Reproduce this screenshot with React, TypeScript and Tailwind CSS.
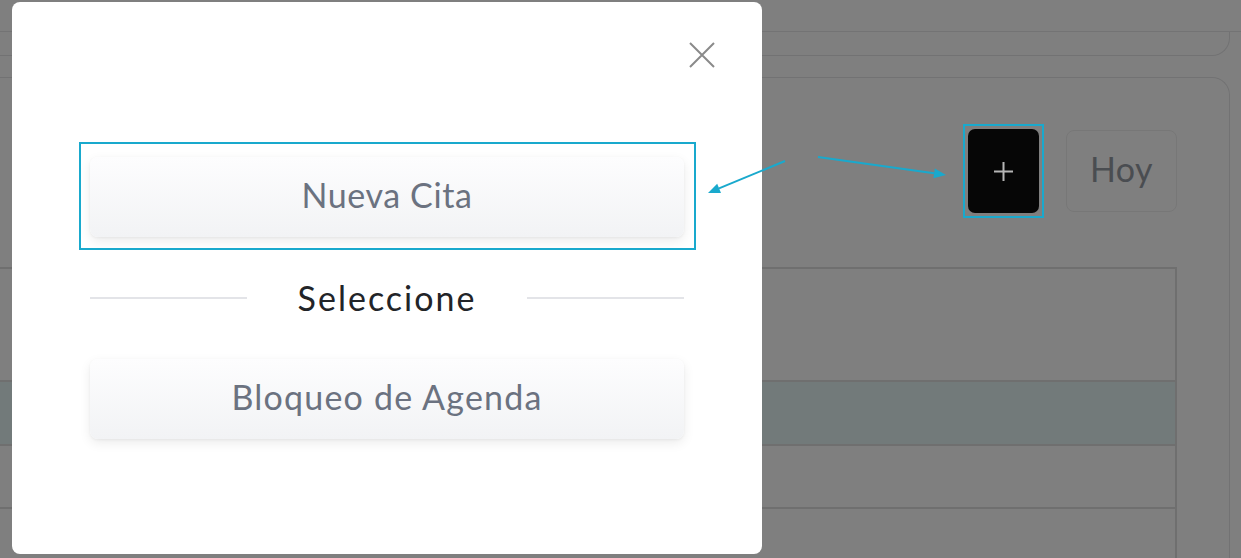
const actionBtn =
  "flex h-[80px] w-full items-center justify-center rounded-lg bg-gradient-to-b from-[#fdfdfe] to-[#f2f3f5] pb-[5px] text-[34px] text-[#6b7280] shadow-[0_4px_12px_rgba(0,0,0,0.08),0_1px_3px_rgba(0,0,0,0.05)]";

function BackgroundPage() {
  return (
    <div className="flex h-full flex-col">
      {/* Top bar */}
      <div className="h-[32px] shrink-0 border-b border-[#e6e6e8]" />
      {/* Filter card (top hidden) */}
      <div className="-ml-[20px] mr-[11px] h-[24px] shrink-0 rounded-br-[18px] border-b border-r border-[#e4e4e6]" />

      {/* Calendar card */}
      <div className="-ml-[20px] mr-[11px] mt-[21px] flex flex-1 flex-col rounded-tr-[18px] border-r border-t border-[#e4e4e6] pl-[10px]">
        <div className="flex items-center justify-end gap-[22px] pr-[52px] pt-[46px]">
          {/* Highlighted action (sits above the backdrop) */}
          <div className="relative z-20 border-2 border-[#19a9cd] p-[3px]">
            <button
              type="button"
              aria-label="Nuevo"
              className="flex h-[84px] w-[71px] items-center justify-center rounded-[7px] bg-[#060606] text-[#b5b5b5]"
            >
              <svg width="19" height="19" viewBox="0 0 19 19" stroke="currentColor" strokeWidth="2">
                <path d="M9.5 0v19M0 9.5h19" />
              </svg>
            </button>
          </div>
          <button
            type="button"
            className="flex h-[82px] w-[111px] items-center justify-center rounded-lg border border-[#eeeeee] pb-[5px] text-[34px] tracking-[0.5px] text-[#959aa3]"
          >
            Hoy
          </button>
        </div>

        {/* Table */}
        <div className="mr-[52px] mt-[49px] flex-1 border-r-2 border-t-2 border-[#dedede]">
          <div className="h-[113px] border-b-2 border-[#dedede]" />
          <div className="h-[64px] border-b-2 border-[#dedede] bg-[#e4f4f4]" />
          <div className="h-[63px] border-b-2 border-[#dedede]" />
        </div>
      </div>
    </div>
  );
}

export default function App() {
  return (
    <div className="relative h-[558px] w-[1241px] overflow-hidden bg-white font-['Lato',sans-serif]">
      <BackgroundPage />

      {/* Backdrop */}
      <div className="absolute inset-0 z-10 bg-black/50" />

      {/* Modal */}
      <div className="absolute left-[12px] top-[2px] z-20 flex h-[552px] w-[750px] flex-col rounded-lg bg-white">
        <div className="flex justify-end pr-[47px] pt-[40px]">
          <button type="button" aria-label="Cerrar" className="text-[#8a8a8a]">
            <svg width="26" height="26" viewBox="0 0 26 26" fill="none" stroke="currentColor" strokeWidth="2">
              <path d="M1 1 25 25M25 1 1 25" />
            </svg>
          </button>
        </div>

        <div className="mx-[78px] mt-[89px] flex flex-col">
          <div className="relative">
            <div className="absolute -bottom-[13px] -left-[11px] -right-[12px] -top-[15px] border-2 border-[#19a9cd]" />
            <button type="button" className={`${actionBtn} tracking-[0.6px]`}>
              Nueva Cita
            </button>
          </div>

          <div className="mt-[41px] flex items-center">
            <div className="h-[2px] flex-1 bg-[#e3e4e8]" />
            <span className="px-[51px] text-[34px] leading-[40px] tracking-[2px] text-[#222428]">
              Seleccione
            </span>
            <div className="h-[2px] flex-1 bg-[#e3e4e8]" />
          </div>

          <button type="button" className={`${actionBtn} mt-[41px] tracking-[1.2px]`}>
            Bloqueo de Agenda
          </button>
        </div>
      </div>

      {/* Tutorial arrows */}
      <svg className="pointer-events-none absolute inset-0 z-30" width="1241" height="558">
        <g stroke="#19a9cd" strokeWidth="2" fill="#19a9cd">
          <line x1="785" y1="161" x2="719" y2="188.4" />
          <polygon points="708,193 721,193 717.2,183.8" stroke="none" />
          <line x1="818" y1="157" x2="934" y2="173.3" />
          <polygon points="946,175 933.4,178.3 934.8,168.4" stroke="none" />
        </g>
      </svg>
    </div>
  );
}
